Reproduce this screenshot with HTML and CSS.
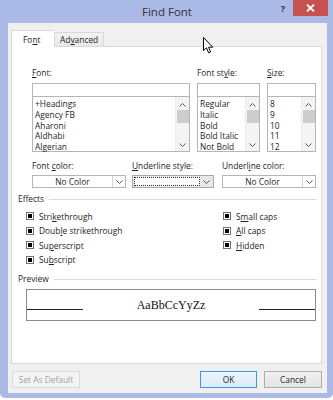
FILE: index.html
```html
<!DOCTYPE html>
<html lang="en">
<head>
  <meta charset="UTF-8" />
  <title>Find Font</title>
  <link rel="stylesheet" href="styles.css">
</head>
<body>
  <div class="window">
    <div class="titlebar">
      <span></span>
      <span class="title">Find Font</span>
      <div class="controls">
        <span class="help">?</span>
        <span class="close">
          <svg width="9" height="8" viewBox="0 0 9 8"><path d="M1 0.5 L8 7.5 M8 0.5 L1 7.5" stroke="#fff" stroke-width="1.8"/></svg>
        </span>
      </div>
    </div>

    <div class="client">
      <div class="tabs">
        <div class="tab active">Fo<u>n</u>t</div>
        <div class="tab">Ad<u>v</u>anced</div>
      </div>

      <div class="panel">
        <div class="font-row">
          <div class="field f-font">
            <div class="label"><u>F</u>ont:</div>
            <div class="input"></div>
            <div class="list">
              <ul>
                <li>+Headings</li>
                <li>Agency FB</li>
                <li>Aharoni</li>
                <li>Aldhabi</li>
                <li>Algerian</li>
              </ul>
              <div class="scroll">
                <svg class="up" width="7" height="4" viewBox="0 0 7 4"><polyline points="0.5,3.5 3.5,0.5 6.5,3.5" fill="none" stroke="#555"/></svg>
                <div class="thumb"></div>
                <svg class="down" width="7" height="4" viewBox="0 0 7 4"><polyline points="0.5,0.5 3.5,3.5 6.5,0.5" fill="none" stroke="#555"/></svg>
              </div>
            </div>
          </div>
          <div class="field f-style">
            <div class="label">Font st<u>y</u>le:</div>
            <div class="input"></div>
            <div class="list">
              <ul>
                <li>Regular</li>
                <li>Italic</li>
                <li>Bold</li>
                <li>Bold Italic</li>
                <li>Not Bold</li>
              </ul>
              <div class="scroll">
                <svg class="up" width="7" height="4" viewBox="0 0 7 4"><polyline points="0.5,3.5 3.5,0.5 6.5,3.5" fill="none" stroke="#555"/></svg>
                <div class="thumb"></div>
                <svg class="down" width="7" height="4" viewBox="0 0 7 4"><polyline points="0.5,0.5 3.5,3.5 6.5,0.5" fill="none" stroke="#555"/></svg>
              </div>
            </div>
          </div>
          <div class="field f-size">
            <div class="label"><u>S</u>ize:</div>
            <div class="input"></div>
            <div class="list">
              <ul>
                <li>8</li>
                <li>9</li>
                <li>10</li>
                <li>11</li>
                <li>12</li>
              </ul>
              <div class="scroll">
                <svg class="up" width="7" height="4" viewBox="0 0 7 4"><polyline points="0.5,3.5 3.5,0.5 6.5,3.5" fill="none" stroke="#555"/></svg>
                <div class="thumb"></div>
                <svg class="down" width="7" height="4" viewBox="0 0 7 4"><polyline points="0.5,0.5 3.5,3.5 6.5,0.5" fill="none" stroke="#555"/></svg>
              </div>
            </div>
          </div>
        </div>

        <div class="drop-row">
          <div class="field d-color">
            <div class="label">Font <u>c</u>olor:</div>
            <div class="select">
              <span class="value">No Color</span>
              <span class="arrow"><svg width="7" height="4" viewBox="0 0 7 4"><polyline points="0.5,0.5 3.5,3.5 6.5,0.5" fill="none" stroke="#555"/></svg></span>
            </div>
          </div>
          <div class="field d-style">
            <div class="label"><u>U</u>nderline style:</div>
            <div class="select gray">
              <span class="value"><span class="dotted"></span></span>
              <span class="arrow"><svg width="7" height="4" viewBox="0 0 7 4"><polyline points="0.5,0.5 3.5,3.5 6.5,0.5" fill="none" stroke="#555"/></svg></span>
            </div>
          </div>
          <div class="field d-ucolor">
            <div class="label">Underl<u>i</u>ne color:</div>
            <div class="select">
              <span class="value">No Color</span>
              <span class="arrow"><svg width="7" height="4" viewBox="0 0 7 4"><polyline points="0.5,0.5 3.5,3.5 6.5,0.5" fill="none" stroke="#555"/></svg></span>
            </div>
          </div>
        </div>

        <div class="group-title effects-title"><span>Effects</span></div>
        <div class="effects">
          <div class="checks">
            <div class="check"><span class="box"></span>Stri<u>k</u>ethrough</div>
            <div class="check"><span class="box"></span>Doub<u>l</u>e strikethrough</div>
            <div class="check"><span class="box"></span>Su<u>p</u>erscript</div>
            <div class="check"><span class="box"></span>Su<u>b</u>script</div>
          </div>
          <div class="checks">
            <div class="check"><span class="box"></span>S<u>m</u>all caps</div>
            <div class="check"><span class="box"></span><u>A</u>ll caps</div>
            <div class="check"><span class="box"></span><u>H</u>idden</div>
          </div>
        </div>

        <div class="group-title preview-title"><span>Preview</span></div>
        <div class="preview">
          <span class="rule"></span>
          <span class="sample">AaBbCcYyZz</span>
          <span class="rule"></span>
        </div>
      </div>

      <div class="buttons">
        <button class="btn disabled">Set As Default</button>
        <span class="spacer"></span>
        <button class="btn ok">OK</button>
        <button class="btn">Cancel</button>
      </div>
    </div>

    <svg class="cursor" width="11" height="17" viewBox="0 0 11 17">
      <path d="M0.5 0.5 L0.5 13.5 L3.5 10.8 L5.6 15.8 L7.6 15 L5.6 10.2 L9.8 10.2 Z" fill="#fff" stroke="#000" stroke-width="1" stroke-linejoin="miter"/>
    </svg>
  </div>
</body>
</html>
```

FILE: styles.css
```css
* {
  box-sizing: border-box;
  margin: 0;
  padding: 0;
}
body {
  background: #fff;
  font-family: 'Open Sans', 'Noto Sans', sans-serif;
  font-size: 8.4px;
  color: #1e1e1e;
}
u {
  text-decoration-thickness: 1px;
  text-underline-offset: 1px;
}
.window {
  position: relative;
  width: 333px;
  height: 398px;
  background: #aab9e5;
  border-radius: 0 0 5px 5px;
  padding: 0 6px 5px 8px;
}
.titlebar {
  height: 23px;
  display: grid;
  grid-template-columns: 1fr auto 1fr;
  margin: 0 -6px 0 -8px;
}
.title {
  font-size: 11.5px;
  color: #333;
  line-height: 24px;
  padding-left: 1px;
}
.controls {
  display: flex;
  justify-content: flex-end;
  align-items: flex-start;
}
.help {
  font-weight: bold;
  font-size: 9px;
  color: #333;
  line-height: 18px;
  margin-right: 8px;
}
.close {
  width: 35px;
  height: 16px;
  background: #c75050;
  margin-right: 5px;
  display: flex;
  justify-content: center;
  align-items: center;
}
.client {
  background: #f0f0f0;
  height: 370px;
  padding: 7px 5px 0 3px;
}
.tabs {
  display: flex;
  align-items: flex-end;
  height: 16px;
  position: relative;
  z-index: 1;
}
.tab {
  height: 14px;
  line-height: 13px;
  padding: 0 5px;
  border: 1px solid #d9d9d9;
  border-bottom: none;
  background: linear-gradient(#f3f3f3, #e8e8e8);
}
.tab.active {
  height: 17px;
  margin-bottom: -1px;
  width: 43px;
  padding: 0 0 0 11px;
  line-height: 17px;
  background: #fff;
  border-right: none;
}
.panel {
  background: #fff;
  border: 1px solid #d9d9d9;
  height: 318px;
  padding: 21px 4px 0 6px;
}
.label {
  height: 10px;
  line-height: 10px;
  margin-bottom: 5px;
  white-space: nowrap;
}
.font-row {
  display: flex;
  gap: 7px;
  padding-left: 14px;
}
.f-font { width: 158px; }
.f-style { width: 63px; }
.f-size { width: 49px; }
.input {
  height: 14px;
  border: 1px solid #b5b5b5;
  background: #fff;
}
.list {
  height: 56px;
  margin-top: -1px;
  border: 1px solid #b5b5b5;
  display: flex;
}
.list ul {
  flex: 1;
  list-style: none;
  padding: 2px 0 0 2px;
}
.list li {
  height: 10.8px;
  line-height: 10.8px;
  white-space: nowrap;
}
.scroll {
  width: 14px;
  background: #f4f4f4;
  border-left: 1px solid #ececec;
  display: flex;
  flex-direction: column;
  align-items: center;
  padding-top: 6px;
}
.scroll .thumb {
  width: 12px;
  height: 13px;
  background: #cdcdcd;
  margin: 3px 0 0;
}
.scroll .down {
  margin-top: auto;
  margin-bottom: 4px;
}
.drop-row {
  display: flex;
  padding-left: 14px;
  margin-top: 9px;
}
.d-color { width: 94px; }
.d-style { width: 82px; margin-left: 6px; }
.d-ucolor { width: 94px; margin-left: 8px; }
.drop-row .label { margin-bottom: 4px; }
.select {
  height: 13px;
  border: 1px solid #b5b5b5;
  background: #fff;
  display: flex;
}
.select .value {
  flex: 1;
  text-align: center;
  line-height: 11px;
}
.select .arrow {
  width: 13px;
  border-left: 1px solid #d5d5d5;
  display: flex;
  justify-content: center;
  align-items: center;
}
.select.gray {
  background: #e8e8e8;
  border-color: #a8a8a8;
}
.select.gray .arrow {
  border-left: none;
}
.select.gray .value {
  padding: 1px 0 1px 1px;
}
.dotted {
  display: block;
  height: 9px;
  background: #fff;
  border: 1px dotted #333;
}
.group-title {
  display: flex;
  align-items: center;
  height: 10px;
  line-height: 10px;
}
.group-title::after {
  content: '';
  flex: 1;
  height: 1px;
  background: #dcdcdc;
  margin-left: 5px;
}
.effects-title { margin-top: 6px; }
.effects {
  display: flex;
  padding-left: 8px;
  margin-top: 5px;
}
.checks:first-child { width: 197px; }
.check {
  display: flex;
  align-items: center;
  height: 14.5px;
  white-space: nowrap;
}
.check .box {
  width: 8px;
  height: 8px;
  border: 1px solid #707070;
  background: #fff;
  margin-right: 5px;
  padding: 1px;
}
.check .box::before {
  content: '';
  display: block;
  width: 4px;
  height: 4px;
  background: #000;
}
.preview-title { margin-top: 7px; }
.preview {
  margin: 5px 1px 0 8px;
  height: 32px;
  border: 1px solid #8c8c8c;
  display: flex;
  justify-content: space-between;
  align-items: center;
}
.preview .rule {
  width: 56px;
  height: 1px;
  background: #222;
  margin-top: 9px;
}
.sample {
  font-family: 'Liberation Serif', serif;
  font-size: 12px;
  color: #111;
}
.buttons {
  display: flex;
  gap: 7px;
  margin-top: 7px;
  padding-left: 1px;
}
.spacer { flex: 1; }
.btn {
  font-family: inherit;
  font-size: 8.4px;
  color: #1e1e1e;
  height: 17px;
  background: linear-gradient(#f0f0f0, #e5e5e5);
  border: 1px solid #acacac;
}
.btn.disabled {
  width: 68px;
  color: #a3a3a3;
  background: #f4f4f4;
  border-color: #d9d9d9;
}
.btn.ok {
  width: 57px;
  border-color: #3c9ae0;
  background: linear-gradient(#ecf4fc, #dcecfc);
}
.buttons .btn:last-child { width: 58px; }
.cursor {
  position: absolute;
  left: 203px;
  top: 37px;
}
```
